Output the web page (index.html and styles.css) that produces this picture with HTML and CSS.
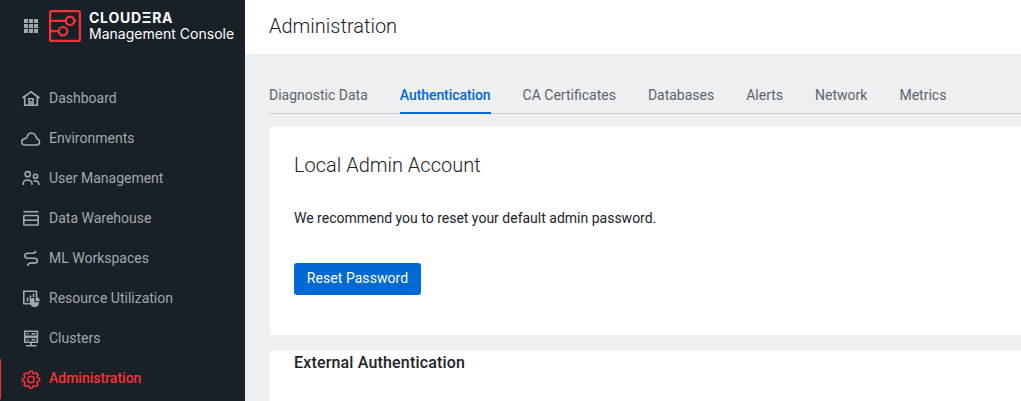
FILE: index.html
```html
<!DOCTYPE html>
<html lang="en">
<head>
<meta charset="utf-8">
<title>Cloudera Management Console</title>
<link rel="stylesheet" href="styles.css">
</head>
<body>
<div class="app">
  <aside class="sidebar">
    <div class="brand">
      <svg class="grid-icon" width="14" height="14" viewBox="0 0 14 14" fill="#a3a8ac">
        <path d="M0 0h4v4H0zM5 0h4v4H5zM10 0h4v4h-4zM0 5h4v4H0zM5 5h4v4H5zM10 5h4v4h-4zM0 10h4v4H0zM5 10h4v4H5zM10 10h4v4h-4z"/>
      </svg>
      <svg class="logo" width="32" height="32" viewBox="0 0 32 32" fill="none" stroke="#f83336" stroke-width="2.2">
        <rect x="1.100" y="1.100" width="29.800" height="29.800" rx="1.500"/>
        <circle cx="21" cy="10.800" r="4.200"/>
        <circle cx="14" cy="21.200" r="4.200"/>
        <path d="M1 10.800h16M25 10.800h2M1 21.200h9"/>
      </svg>
      <div class="brand-text">
        <div class="brand-name">CLOUDΞRA</div>
        <div class="brand-product">Management Console</div>
      </div>
    </div>
    <nav class="nav">
      <a class="nav-item">
        <svg class="icon" viewBox="0 0 20 20"><path d="M1.500 9 10 2.800 18.500 9M3.700 8v8.300h12.600V8M8 16V9.800h4V16M10 12v4"/></svg>
        <span>Dashboard</span></a>
      <a class="nav-item">
        <svg class="icon" viewBox="0 0 20 20"><path d="M4.500 16h11.500a3.100 3.100 0 0 0 .4-6C15.500 9.600 15.500 8 14.600 6.600 12.500 3 7.800 3.200 6.300 7 6 8 5.700 8.900 4.800 9.400 3 9.800.7 10.600.7 13c0 1.900 1.600 3 3.800 3z"/></svg>
        <span>Environments</span></a>
      <a class="nav-item">
        <svg class="icon" viewBox="0 0 20 20"><circle cx="6.700" cy="5.200" r="2.600"/><circle cx="14.500" cy="7.300" r="2.100"/><path d="M2.200 16v-1.300c0-5 8.800-5 8.800 0V16M12.500 12.200c2.400-1 5.300.3 5.300 2.700V16"/></svg>
        <span>User Management</span></a>
      <a class="nav-item">
        <svg class="icon" viewBox="0 0 20 20"><path d="M2.500 2.700h15"/><rect x="2.800" y="6.500" width="14.400" height="9.500" rx=".8"/><path d="M3 11.200h14"/></svg>
        <span>Data Warehouse</span></a>
      <a class="nav-item">
        <svg class="icon" viewBox="0 0 20 20"><path d="M14.700 1.800c0 2-1 2.500-2.500 2.500H7c-4.200 0-4.200 4.900 0 4.900h6.200c4.200 0 4.200 4.900 0 4.900H9.500c-1.800 0-2.600.8-2.600 2.900"/></svg>
        <span>ML Workspaces</span></a>
      <a class="nav-item">
        <svg class="icon" viewBox="0 0 20 20"><path d="M9 14.800H2.800V2.300h12.700V8"/><path d="M6.500 8.500V12.500M9.500 6.500v6M12.500 4.500V8"/><path class="solid" d="M13.500 8.700v4.600h4.700a4.700 4.700 0 1 1-4.700-4.600zM14.800 8a4.200 4.200 0 0 1 4 4.300h-4z"/></svg>
        <span>Resource Utilization</span></a>
      <a class="nav-item">
        <svg class="icon" viewBox="0 0 20 20"><path d="M3.800 2.300h12.600v4.900H3.800zM3.800 8.300h12.600v4.900H3.800zM10.200 13v4M5 16.800h10.500M6 4.800h1.500M10.500 4.800h4M6 10.800h1.500M10.500 10.800h4"/></svg>
        <span>Clusters</span></a>
      <a class="nav-item active">
        <svg class="icon" viewBox="0 0 20 20"><path d="M8.600 2.200h2.800l.5 2 1.400.6 1.800-1.100 2 2-1.100 1.800.6 1.400 2 .5v2.500l-2 .5-.6 1.400 1.100 1.800-2 2-1.800-1.100-1.400.6-.5 2H8.600l-.5-2-1.400-.6-1.800 1.100-2-2L4 13.800l-.6-1.400-2-.5V9.400l2-.5L4 7.500 2.900 5.700l2-2 1.800 1.100 1.400-.6z"/><circle cx="10" cy="10.500" r="3.200"/></svg>
        <span>Administration</span></a>
    </nav>
  </aside>
  <div class="page">
    <header class="header"><h1>Administration</h1></header>
    <main class="content">
      <div class="tabs">
        <a class="tab">Diagnostic Data</a>
        <a class="tab selected">Authentication</a>
        <a class="tab">CA Certificates</a>
        <a class="tab">Databases</a>
        <a class="tab">Alerts</a>
        <a class="tab">Network</a>
        <a class="tab">Metrics</a>
      </div>
      <section class="card account">
        <h2>Local Admin Account</h2>
        <p>We recommend you to reset your default admin password.</p>
        <button class="button">Reset Password</button>
      </section>
      <section class="card external"><h3>External Authentication</h3></section>
    </main>
  </div>
</div>
</body>
</html>
```
FILE: styles.css
```css
* { box-sizing: border-box; }
body { margin: 0; font-family: Roboto, "Liberation Sans", sans-serif; font-size: 14px; color: #1b2329; }
h1, h2, h3, p { margin: 0; }
.app { display: flex; height: 401px; overflow: hidden; }
.sidebar { width: 245px; flex: none; background: #172127; color: #a3a8ac; }
.brand { display: flex; height: 78px; padding: 10px 0 0 24px; align-items: flex-start; }
.grid-icon { margin-top: 9px; }
.logo { margin-left: 11px; }
.brand-text { margin-left: 8px; color: #fff; white-space: nowrap; }
.brand-name { font: 700 14px/16px Inter, Roboto, sans-serif; letter-spacing: .75px; }
.brand-product { font: 400 14px/16px Inter, Roboto, sans-serif; letter-spacing: .02px; }
.nav-item { display: flex; align-items: center; height: 40px; padding-left: 20px; border-left: 1px solid transparent; line-height: 20px; }
.icon { width: 20px; height: 20px; margin-right: 8px; fill: none; stroke: currentColor; stroke-width: 1.6; }
.solid { fill: currentColor; stroke: none; }
.nav { padding-top: 1px; }
.nav-item span { margin-top: -2px; }
.active { color: #f83336; border-left-color: #f83336; font-weight: 500; }
.active .icon { stroke-width: 1.5; }
.page { flex: 1; min-width: 0; background: #edeff1; }
.header { height: 54px; padding: 14px 24px 0; background: #fff; }
h1, h2 { font-size: 20px; line-height: 24px; font-weight: 300; }
.content { padding-left: 24px; }
.tabs { display: flex; gap: 32px; height: 60px; padding-top: 24px; border-bottom: 1px solid #cdd1d4; color: #5a656d; }
.tab { height: 36px; line-height: 35px; white-space: nowrap; }
.selected { color: #0069d2; font-weight: 500; border-bottom: 2px solid #0069d2; letter-spacing: -.07px; }
.card { margin-left: 1px; background: #fff; padding-left: 24px; }
.account { height: 208px; margin-top: 13px; padding-top: 26px; border-radius: 2px 0 0 2px; }
.account p { margin-top: 31px; line-height: 20px; }
.button { display: block; width: 127px; height: 32px; margin-top: 35px; padding: 0 0 2px; border: 0; border-radius: 3px; background: #0069d2; color: #fff; font: 400 14px Roboto, sans-serif; letter-spacing: .05px; }
.external { height: 60px; margin-top: 16px; padding-top: 1px; }
h3 { font-size: 16px; line-height: 22px; font-weight: 500; letter-spacing: .17px; }
```
